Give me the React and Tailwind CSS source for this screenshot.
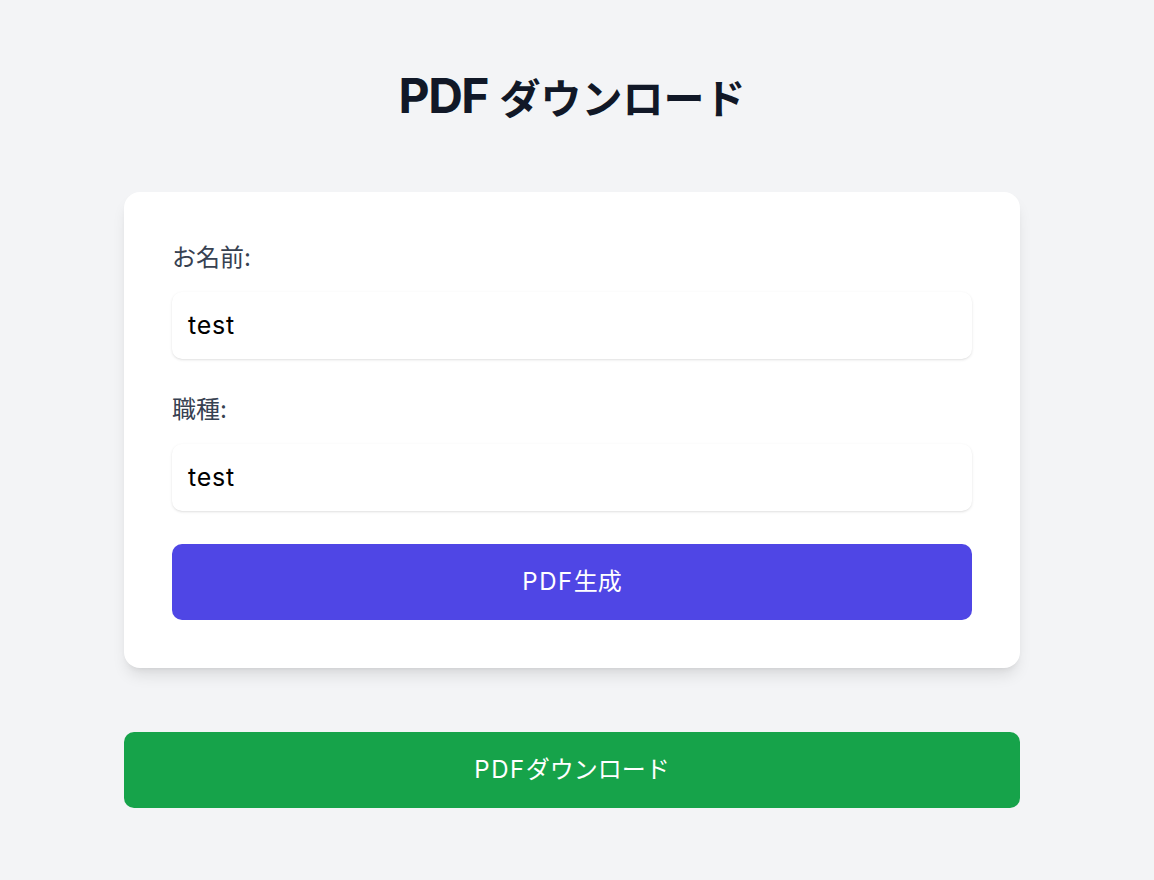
export default function App() {
  return (
    <div
      className="min-h-screen bg-[#f3f4f6]"
      style={{ fontFamily: 'Inter, "Noto Sans CJK JP", sans-serif' }}
    >
      <div className="w-[1144px] flex flex-col items-center">
        <h1 className="mt-[72px] h-[48px] flex items-center text-[#111827] whitespace-nowrap">
          <span className="text-[48px] leading-[48px] font-bold tracking-[-1.5px]">PDF</span>
          <span className="text-[48px] leading-[48px] font-bold">&nbsp;</span>
          <span className="text-[41px] leading-[48px] font-semibold" style={{ fontFamily: '"Noto Sans CJK JP", sans-serif' }}>
            ダウンロード
          </span>
        </h1>
        <div className="mt-[72px] w-[896px] bg-white rounded-2xl shadow-lg p-12">
          <label className="block text-2xl leading-9 text-[#374151] mb-4">お名前:</label>
          <div className="h-[67px] rounded-[10px] bg-white shadow-sm flex items-center px-4 text-[25px] tracking-[0.8px] text-black mb-[33px]">
            test
          </div>
          <label className="block text-2xl leading-9 text-[#374151] mb-4">職種:</label>
          <div className="h-[67px] rounded-[10px] bg-white shadow-sm flex items-center px-4 text-[25px] tracking-[0.8px] text-black mb-[33px]">
            test
          </div>
          <button className="w-full h-[76px] rounded-[10px] bg-[#4f46e5] text-white text-2xl">
            <span className="tracking-[1.5px]">PDF</span>生成
          </button>
        </div>
        <button className="mt-16 w-[896px] h-[76px] rounded-[10px] bg-[#16a34a] text-white text-2xl">
          <span className="tracking-[1.5px]">PDF</span>ダウンロード
        </button>
      </div>
    </div>
  );
}
